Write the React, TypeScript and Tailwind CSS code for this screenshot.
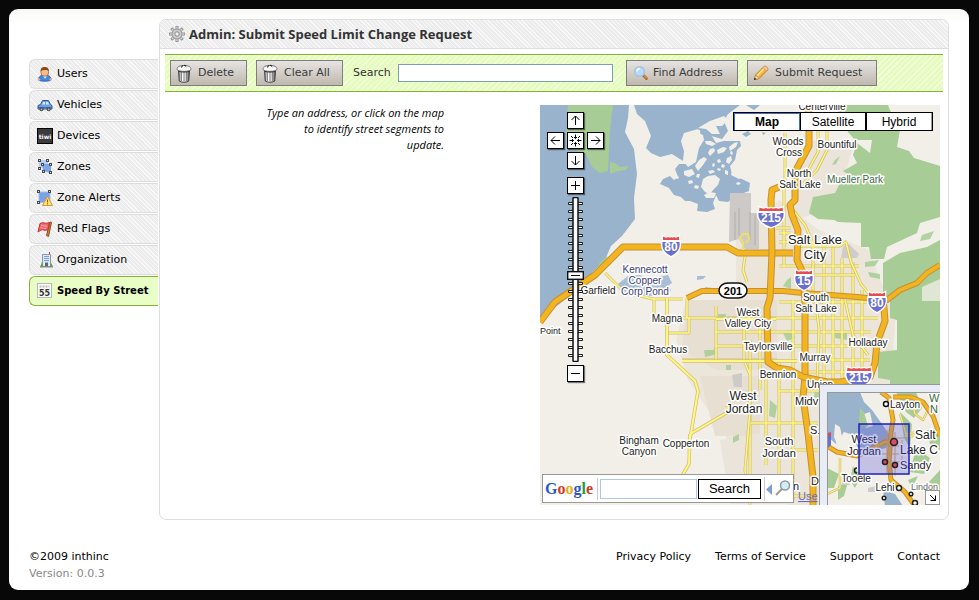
import type { ReactNode } from "react";

const uiFont = "font-['DejaVu_Sans',Verdana,sans-serif]";

/* ---------- icons ---------- */

function Svg({ children, size = 16 }: { children: ReactNode; size?: number }) {
  return (
    <svg width={size} height={size} viewBox="0 0 16 16" aria-hidden="true" className="shrink-0">
      {children}
    </svg>
  );
}

const UserIcon = () => (
  <Svg>
    <path d="M1.500 14c0-4 3-5 6.500-5s6 1.500 6 5c-1 1.500-11.500 1.500-12.500 0z" fill="#3f8ae0" stroke="#1f5fc0" />
    <path d="M6 10l2 3 2-3z" fill="#cfe6ff" />
    <circle cx="1.900" cy="13.500" r="1.300" fill="#eeb07a" />
    <circle cx="13.700" cy="13.500" r="1.300" fill="#eeb07a" />
    <rect x="4" y="2.500" width="7.500" height="7.500" rx="3" fill="#f6bd8b" stroke="#a86432" strokeWidth=".8" />
    <path d="M3.600 5.500C3.500 2 5 1 7.700 1s4.400 1.200 4.200 4.500c-1-1.500-2-1.800-4.200-1.500-2 .2-3 .2-4.100 1.500z" fill="#8b4a1c" />
  </Svg>
);
const CarIcon = () => (
  <Svg>
    <path d="M1 8.500l2.500-1L5.500 3.500h6l2 4 1.500 1v3.500H1z" fill="#6ea1df" stroke="#2c5a9c" />
    <path d="M5 7.500L6.300 5H8v2.500zM9 5h2l1.200 2.500H9z" fill="#d5e8fb" />
    <path d="M1 10.500h14" stroke="#3b6cb0" />
    <circle cx="4.500" cy="12.300" r="2" fill="#4b4b4b" />
    <circle cx="4.500" cy="12.300" r=".9" fill="#b8b8b8" />
    <circle cx="11.700" cy="12.300" r="2" fill="#4b4b4b" />
    <circle cx="11.700" cy="12.300" r=".9" fill="#b8b8b8" />
  </Svg>
);
const DeviceIcon = () => (
  <Svg>
    <rect x=".5" y=".5" width="15" height="15" fill="#3c3c3c" stroke="#000" />
    <text x="8" y="10.500" fontSize="6" fontWeight="bold" fill="#fff" textAnchor="middle" fontFamily="DejaVu Sans">tiwi</text>
  </Svg>
);
const Handle = ({ x, y }: { x: number; y: number }) => (
  <rect x={x} y={y} width="2" height="2" fill="#ddd" stroke="#4a4a4a" />
);
const ZonesIcon = () => (
  <Svg>
    <path d="M2 1h9v8H2z" fill="#b6cff5" />
    <path d="M5 5l9 0v9l-8-2z" fill="#7ba7ea" />
    <Handle x={1.5} y={.5} /><Handle x={9.5} y={.5} /><Handle x={1.5} y={8.5} />
    <Handle x={4.5} y={4.5} /><Handle x={12.5} y={4.5} /><Handle x={5.5} y={11.5} /><Handle x={12.5} y={12.5} />
  </Svg>
);
const AlertIcon = () => (
  <Svg>
    <path d="M2 2h11v9L2 13z" fill="#78a3e6" stroke="#9fbfee" />
    <Handle x={.5} y={.5} /><Handle x={11.5} y={.5} /><Handle x={.5} y={11.5} />
    <path d="M10.500 6.500l5 9h-10z" fill="#ffe27a" stroke="#d79a24" />
    <path d="M10.500 9.500v3M10.500 13.300v1.200" stroke="#8a5a10" />
  </Svg>
);
const FlagIcon = () => (
  <Svg>
    <path d="M13 1l1.500 .5-3 14-2-1z" fill="#c98742" stroke="#8a501c" />
    <path d="M3 2.500c3-2 5 1 9.500-1L11 8.500c-3 2-5-.5-7 .5L1 11z" fill="#f0666a" stroke="#cf2a30" />
    <path d="M4 4.500c2-1 3 1 6 .5M3.500 7c2-1 3 1 6 .5" stroke="#ffb0b0" fill="none" />
  </Svg>
);
const BuildingIcon = () => (
  <Svg>
    <path d="M12.500 0v3" stroke="#c33" />
    <path d="M5.500 2.500h8v12h-8z" fill="#dce8f8" stroke="#8c98a8" />
    <path d="M7 4.500h5M7 6.500h5M7 8.500h5" stroke="#6f9fe0" />
    <rect x="8" y="10.500" width="3" height="4" fill="#666" />
    <path d="M3 15l2-5 1.500 5zM12.500 15l2-4 1.500 4z" fill="#57a84f" />
    <path d="M3 15h13" stroke="#888" />
  </Svg>
);
const SpeedIcon = () => (
  <Svg>
    <rect x=".5" y=".5" width="14" height="14" fill="#fafafa" stroke="#b8b8b8" />
    <path d="M2.500 3.500h10" stroke="#bbb" strokeWidth="2" strokeDasharray="2 1" />
    <text x="7.500" y="12.500" fontSize="8" fontWeight="bold" fill="#333" textAnchor="middle" fontFamily="DejaVu Sans">55</text>
  </Svg>
);
const GearIcon = () => (
  <Svg>
    <g stroke="#8f8f8f" strokeWidth="3">
      <path d="M8 0v16M0 8h16M2.300 2.300l11.400 11.400M13.700 2.300L2.300 13.700" />
    </g>
    <g stroke="#d2d2d2" strokeWidth="1.500">
      <path d="M8 .7v14.600M.7 8h14.600M3 3l10 10M13 3L3 13" />
    </g>
    <circle cx="8" cy="8" r="5" fill="#cacaca" stroke="#9a9a9a" />
    <circle cx="8" cy="8" r="2.200" fill="#f2f2f2" stroke="#8a8a8a" />
  </Svg>
);
const TrashIcon = () => (
  <svg width="16" height="19" viewBox="0 0 16 19" aria-hidden="true" className="shrink-0">
    <defs>
      <linearGradient id="can"><stop offset="0" stopColor="#777" /><stop offset=".35" stopColor="#fff" /><stop offset=".7" stopColor="#ccc" /><stop offset="1" stopColor="#444" /></linearGradient>
    </defs>
    <path d="M2.500 6h11l-.7 11c-2 1.700-7.600 1.700-9.600 0z" fill="url(#can)" stroke="#444" />
    <path d="M5.500 8v9M8 8v9.500M10.500 8v9" stroke="#888" />
    <path d="M1 5.500C1 2.500 4 1.500 8 1.500s7 1 7 4C13 8 3 8 1 5.500z" fill="#f8f8f8" stroke="#777" />
    <path d="M5.500 3.500C6 .5 10 .5 10.500 3.500" fill="none" stroke="#222" strokeWidth="1.200" strokeDasharray="2.500 1" />
    <path d="M2.500 7.300c3 1 8 1 11 0" fill="none" stroke="#333" />
  </svg>
);
const FindIcon = () => (
  <Svg>
    <path d="M10 10l3.500 3.500" stroke="#b3682b" strokeWidth="3" strokeLinecap="round" />
    <path d="M10 9.500l4 4" stroke="#eaa765" strokeWidth="1" />
    <circle cx="6.500" cy="6.500" r="4.800" fill="#b5dafb" stroke="#a3c2e6" strokeWidth="1.500" />
    <path d="M4 6.500c0-2 1-2.800 2.800-3" stroke="#fff" strokeWidth="1.500" fill="none" />
  </Svg>
);
const PencilIcon = () => (
  <Svg>
    <path d="M1.500 14.500l1-4.500 8.500-8.500c1.500-1 4.500 1.500 3.500 3.500L6 13.500z" fill="#fbb13c" stroke="#c87a1c" />
    <path d="M4.500 10.500l7-7.500" stroke="#ffe58c" strokeWidth="1.800" />
    <path d="M10 2.500l3.500 3.500 1.300-1.500c.5-2-2-4-3.800-3z" fill="#f6c7a0" stroke="#d08a50" strokeWidth=".7" />
    <path d="M1.500 14.500l1-4.500 3.500 3.500z" fill="#fbe6c0" stroke="#b8823a" strokeWidth=".7" />
    <path d="M1 15l.7-2.500 1.800 1.800z" fill="#222" />
  </Svg>
);

/* ---------- map drawing ---------- */

function Road({ d, w = 2 }: { d: string; w?: number }) {
  return (
    <g fill="none" strokeLinejoin="round">
      <path d={d} stroke="#d2c07a" strokeWidth={w + 1.5} />
      <path d={d} stroke="#fff67c" strokeWidth={w} />
    </g>
  );
}

function Freeway({ d, w = 5 }: { d: string; w?: number }) {
  return (
    <g fill="none" strokeLinejoin="round">
      <path d={d} stroke="#c78f35" strokeWidth={w + 2} />
      <path d={d} stroke="#f2b51f" strokeWidth={w} />
    </g>
  );
}

type LabelProps = { x: number; y: number; size?: number; fill?: string; anchor?: "start" | "middle"; children: string };
function Label({ x, y, size = 10, fill = "#222", anchor = "middle", children }: LabelProps) {
  return (
    <text x={x} y={y} fontSize={size} fill={fill} textAnchor={anchor} stroke="#fff" strokeWidth="3" strokeLinejoin="round" paintOrder="stroke" fontFamily="Liberation Sans, Arial, sans-serif">
      {children}
    </text>
  );
}

function Shield({ x, y, wide = false, children }: { x: number; y: number; wide?: boolean; children: string }) {
  const body = wide
    ? "M-12.500 -4H12.500C13.500 3 7 8 0 10C-7 8 -13.500 3 -12.500 -4z"
    : "M-8.500 -4H8.500C9.500 3 6 7 0 10C-6 7 -9.500 3 -8.500 -4z";
  const crown = wide
    ? "M-11.500 -9.500Q-8 -7.500 -5 -9Q-2 -8 0 -9Q2 -8 5 -9Q8 -7.500 11.500 -9.500L12 -6H-12z"
    : "M-8 -9.500Q-5 -7.500 -3 -9Q-1 -8 0 -9Q1 -8 3 -9Q5 -7.500 8 -9.500L8 -6H-8z";
  return (
    <g transform={`translate(${x} ${y})`}>
      <path d={body} fill="#fff" stroke="#fff" strokeWidth="3" />
      <path d={crown} fill="#fff" stroke="#fff" strokeWidth="2.500" />
      <path d={body} fill="#6b70cf" />
      <path d={crown} fill="#e54b50" />
      <text y="5" fontSize="12" fontWeight="bold" fill="#fff" textAnchor="middle" fontFamily="Liberation Sans, Arial, sans-serif">{children}</text>
    </g>
  );
}

const ponds =
  "M694 128l8 2 8 3 6 10 8-2 8 0 8 0 1 5-4 4-2 10-5 6 2 8 8 4 10 5-1 8-8 3-7 3-6 5-9-1-3-6-3 8 2 6-8 3-10-1 1-7-8-3-5 0-4-4-7-2-5-7-9-4 3-5 7-3 4 4 4-3-3-8 4-5 7 0 2-3 6-4 3-9 4-8-1-10z";
const islands =
  "M684 138l4-6 8 0 7 3 1 5-5 8-3 14-8 5-4-5 1-9-3-9zM699 160l5-3 3 2-4 6-5 6-3-5zM705 141l6 0 5 3-4 2-6-2zM710 149l4-1 1 3-5 5-2-3zM717 150l6-3 4 1-3 4-6 2zM729 147l5-4 4-1-2 5-6 4zM684 171l8-2 3 5-6 3-5-2zM703 179l5-3 7-1 5 4-2 6-5 5-3 4-5-2-4-5zM708 171l5-1 2 2-5 2zM704 195l5-3 7 1-2 5-8 0zM717 160l3-1 1 3-3 1zM713 163l2 1-1 3-2-1zM722 164l3 1-1 3-3-1zM718 168l3 1-1 2-3-1zM727 158l4-2 1 4-3 4-3-2zM725 170l3 1 0 4-3-1zM732 171l4 2 6 5-3 1-8-4zM697 174l3 0-1 4-3-1zM688 181l4-1 1 3-4 1zM695 185l4 1-1 3-4-1zM676 176l3 1-1 2-3-1zM736 183l3-1 2 2-4 1zM730 152l2-1 1 3-2 1z";

function MapCanvas() {
  return (
    <svg viewBox="540 105 400 400" className="block size-full" role="img" aria-label="Street map of Salt Lake City">
      <rect x="540" y="105" width="400" height="400" fill="#f2efe9" />
      {/* built-up areas */}
      <path d="M779 200l40 30 50 20 15 40 12 20-5 70-8 45-20 80h-75l-30-55-30-10-40-60-12-40 10-40h50v-60z" fill="#ebe5da" />
      <path d="M687 300h90v70h-60l-35-20zM700 376h60v60h-45z" fill="#e7dfd2" />
      <path d="M812 140l40 10-15 55-40 15-6-30zM720 440l60-10 20 74h-70z" fill="#ebe4da" />
      {/* lakes */}
      <path d="M540 105h89l-1 13-3 14 9 17 3 25-3 24 1 21-13 17-11 10-6 14-20 20-14 15-31 24z" fill="#99b3cc" />
      <path d="M634 105h106l-12 9-4 7 4 10-6 8-14-4-10-6-14 4-3 8 3 10-1 10-11-7-12 3-9-4-5-5 5-12-6-15-8-7z" fill="#99b3cc" />
      <path d={ponds} fill="#99b3cc" />
      <path d={islands} fill="#f2efe9" />
      <path d="M698 128l12-7 14-5 4 4-6 6-6 0 4 8-8 0-6-5z" fill="#f2efe9" />
      <path d="M746 105l8 5 6-5zM742 134l6-3 3 3-5 3zM762 132l4 1-3 2z" fill="#99b3cc" />
      <path d="M618 284l10-8 12-1 6 4 12-2 10-2 4 8-3 2 2 6-14 5-30-1-4-4zM697 276h9l-3 3-6 1zM705 287l8 1-8 3z" fill="#a8bdd6" />
      {/* parks */}
      <path d="M568 105h45l-3 26-1 20-1 20-8 2-8-6-6-13-15-5-5-10z" fill="#a7cc95" />
      <path d="M610 162l5 1 5 4 9-1-3 4-8 1-8 3zM600 262l8-6-4 8-6 4z" fill="#a7cc95" />
      <path d="M835 105h53l2 5 10 20-3 17 12 4 5 7 26 8v51l-20 6-3 10-30 14-3 12h-13l-2-12h-8v-24l-23-1-4-2-16-1-9-6 4-16 22-4 6-12h17l-15-10 14-8-4-8 4-12 13 10 2-13h-17l-7-8z" fill="#a7cc95" />
      <path d="M883 300v-37l17-10 27-6 13-7v145h-50v-5l-12-2v-26l19-2v-30l-7-2v-18z" fill="#a7cc95" />
      <path d="M922 287l18-8v22h-18z" fill="#efece4" opacity=".8" />
      <path d="M922 235l12-4-4 8-10 2zM865 262l14-2-4 6-10 1zM868 272l12 2v5l-10-2zM835 160l5-4-4 8-4 1zM812 182l5-2-3 8-4 2zM787 280l4-3v12l-8-3zM704 350h10v-4l3 8-12 3zM718 314h8v3h-8zM726 365h5v5h-5zM733 437l6-3v6l-6 3zM783 333l8-3 4 8-8 3zM805 349l5 4-4 5-5-3zM835 330l12 3v7l-12-2zM815 390l10 5-5 5-6-3zM770 400l7 6-2 12-6-2z" fill="#a7cc95" opacity=".85" />
      {/* airport */}
      <path d="M730 193h21v20h8v36h-14l-6-10-10 3z" fill="#ccc9c6" />
      <path d="M735 212v28M739 208v28M755 215v30M750 212v28" stroke="#b1aeac" />
      <path d="M843 247l6-3 10 10-2 4h-16z" fill="#cfccc9" />
      <path d="M732 375l10-2v14h-8z" fill="#cdcac7" />

      {/* street grid */}
      <Road w={1.5} d="M716 330v-24M728 318h150M716 332h155M716 346h160M682 360h95M716 360v-45M784 187v80M824 240v140M833 246v134M842 258v122M853 262v118M862 290v80M779 233h12M779 242h30M779 266h80M779 302h95M779 391h70M748 423h70M750 400v103M779 360v135M793 300v200M760 320v70M790 450h28M766 375v90M805 360h65M805 372h40" />
      <Road w={1.5} d="M785 133v54M827 112v38l-10 20-14 14M818 130v22l-12 22M793 210l12 15 8 18v55M747 282l-4-12 3-20M776 228h15M800 246h40l6-4 5 20 10 22 10 12M815 275h40M605 273l20 20 15 3 13 3h30M654 298v18M654 318h35v15h-22M687 298v20h50M744 310v50l6 15M750 340v70l-5 60 5 35M725 408h15M845 300l8 35 15 20" />
      <Road w={2} d="M667 298v57l28 26 3 10-8 48M690 434l38-22M690 434l-1 30-7 12M682 361h115M716 319h60" />
      <Road w={1.5} d="M733 475v28M740 496h75M815 298l4 30-2 60M720 480h75" />

      {/* freeways */}
      <Freeway d="M540 322l15-20 40-27 28-28h104l11 6h55" />
      <Freeway d="M687 298l15-7h81l20 2 54 4 30 3 13-10 17-7 10-10 13-8" w={4} />
      <Freeway d="M809 105v41l-14 26v28l-5 5 2 10 6 15-1 30 6 13 2 30v74l-2 20 5 36 5 44v28" />
      <Freeway d="M779 187l-7 3-1 10 1 53-2 45-3 10 1 54 9 6 13 2 13 7 24 5h13l30-5 5-14 2-20 8-22-2-25" />
      <path d="M743 250v-8l-3-4 3-4h5l1 5-3 4" fill="none" stroke="#efe063" strokeWidth="2" />

      <Shield x={671} y={246}>80</Shield>
      <Shield x={771} y={217} wide>215</Shield>
      <Shield x={804} y={280}>15</Shield>
      <Shield x={877} y={302}>80</Shield>
      <Shield x={859} y={377} wide>215</Shield>
      <rect x="719" y="283" width="28" height="15" rx="9" fill="#fff" stroke="#111" strokeWidth="1.500" />
      <text x="733" y="295" fontSize="11" fontWeight="bold" textAnchor="middle" fontFamily="Liberation Sans">201</text>

      <Label x={822} y={110}>Centerville</Label>
      <Label x={788} y={145}>Woods</Label>
      <Label x={789} y={156}>Cross</Label>
      <Label x={837} y={148}>Bountiful</Label>
      <Label x={799} y={177}>North</Label>
      <Label x={800} y={188}>Salt Lake</Label>
      <Label x={855} y={183} fill="#3c6a44">Mueller Park</Label>
      <Label x={815} y={244} size={13}>Salt Lake</Label>
      <Label x={815} y={259} size={13}>City</Label>
      <Label x={645} y={273} fill="#3a4078">Kennecott</Label>
      <Label x={645} y={284} fill="#3a4078">Copper</Label>
      <Label x={645} y={295} fill="#3a4078">Corp Pond</Label>
      <Label x={598} y={294}>Garfield</Label>
      <Label x={540} y={334} size={9} anchor="start">Point</Label>
      <Label x={667} y={322}>Magna</Label>
      <Label x={668} y={353}>Bacchus</Label>
      <Label x={748} y={316}>West</Label>
      <Label x={748} y={327}>Valley City</Label>
      <Label x={816} y={301}>South</Label>
      <Label x={816} y={312}>Salt Lake</Label>
      <Label x={768} y={350}>Taylorsville</Label>
      <Label x={815} y={361}>Murray</Label>
      <Label x={868} y={346}>Holladay</Label>
      <Label x={778} y={378}>Bennion</Label>
      <Label x={820} y={388}>Union</Label>
      <Label x={743} y={400} size={12}>West</Label>
      <Label x={744} y={413} size={12}>Jordan</Label>
      <Label x={795} y={405} size={11} anchor="start">Midv</Label>
      <Label x={810} y={434} size={11} anchor="start">S.</Label>
      <Label x={779} y={445} size={11}>South</Label>
      <Label x={779} y={457} size={11}>Jordan</Label>
      <Label x={639} y={444}>Bingham</Label>
      <Label x={639} y={455}>Canyon</Label>
      <Label x={686} y={447}>Copperton</Label>
      <Label x={811} y={485} anchor="start" size={11}>D</Label>
      <Label x={793} y={490} anchor="start" size={11}>n</Label>
      <text x="798" y="500" fontSize="11" fill="#6a6ad0" textDecoration="underline" fontFamily="Liberation Sans">Use</text>
    </svg>
  );
}

function OverviewMap() {
  return (
    <svg viewBox="828 393 112 112" className="block size-[112px]" role="img" aria-label="Overview map">
      <rect x="827" y="392" width="114" height="114" fill="#f2efe9" />
      <path d="M827 392h33l4 10 8 8 10 14 8 12-4 12-16 4-12-4-8-14-6-2-8 12-9-8z" fill="#99b3cc" />
      <path d="M835 424l5 3 2 10-4 10-4-10zM864 414l6-2 3 14-7 2z" fill="#f2efe9" />
      <path d="M860 408l4 4 4 14-6 2-3-8zM896 392h20l6 16-8 10-8-6zM900 412l12 12-2 24-6-10zM916 448l14 10-6 16-14-2zM827 468l12 6-5 14h-7zM838 486l10-4-4 14-6 4zM853 466l8 10-6 12-5-8zM908 480l10-4-6 12zM926 430h14v20l-10-6zM929 482l11-12v20z" fill="#a7cc95" />
      <path d="M883 490l12 4 8 12h-18z" fill="#99b3cc" />
      <path d="M842 478h8v7h-8zM868 488l8-2v6h-8z" fill="#ccc" />
      <Road w={1} d="M840 458v30l-13 6M900 414l6 20 12-2M912 402l3 12 8 6 6-12M905 436h10" />
      <Freeway w={3} d="M881 392l8 6 4 22-2 12-2 30 2 18 14 12 10 14M893 397h18l12 5 10 14 7 20M827 446l10 6 20 4 28-14h8" />
      <path d="M878 438h26M880 446h24M882 454h20M884 462h20M887 430v44M895 432v44M902 440v30" stroke="#d9a95a" />
      <circle cx="886" cy="404" r="2.500" fill="#fff" stroke="#111" strokeWidth="1.500" />
      <Label x={890} y={408} anchor="start">Layton</Label>
      <Label x={929} y={402} size={11} anchor="start" fill="#3c6a44">W</Label>
      <Label x={930} y={413} size={11} anchor="start" fill="#3c6a44">N</Label>
      <Label x={864} y={443} size={11}>West</Label>
      <Label x={864} y={455} size={11}>Jordan</Label>
      <Label x={915} y={439} size={12} anchor="start">Salt</Label>
      <Label x={900} y={454} size={12} anchor="start">Lake C</Label>
      <Label x={900} y={469} size={11} anchor="start">Sandy</Label>
      <Label x={856} y={482}>Tooele</Label>
      <Label x={885} y={491}>Lehi</Label>
      <Label x={911} y={490} size={9} anchor="start" fill="#666">Lindon</Label>
      <rect x="859" y="424" width="50" height="50" fill="#4b4bd8" fillOpacity=".28" stroke="#2020b8" strokeWidth="1.500" />
      <g fill="#d84a6a" stroke="#222" strokeWidth="1.500">
        <circle cx="894" cy="442" r="3.500" />
        <circle cx="885" cy="462" r="2.500" />
        <circle cx="895" cy="465" r="2.500" />
      </g>
      <g fill="#fff" stroke="#222" strokeWidth="1.500">
        <circle cx="899" cy="488" r="2.500" />
        <circle cx="911" cy="494" r="1.800" />
        <circle cx="884" cy="498" r="1.800" />
        <circle cx="915" cy="503" r="2.500" />
        <path d="M857 468a2.500 2.500 0 1 0 0 5" fill="none" />
      </g>
      <path d="M827 433l4-1v13l-4 4z" fill="#6a6fce" />
      <path d="M827 433h4v3h-4z" fill="#e2484d" />
    </svg>
  );
}

/* ---------- map controls ---------- */

function PadButton({ label, d, className = "" }: { label: string; d: string; className?: string }) {
  return (
    <button type="button" aria-label={label} className={`size-[17px] border border-black bg-white shadow-[1px_1px_1px_rgba(0,0,0,0.5)] ${className}`}>
      <svg viewBox="0 0 15 15" className="block size-[15px]" fill="none" stroke="#000">
        <path d={d} />
      </svg>
    </button>
  );
}

const ticks = Array.from({ length: 20 }, (_, i) => 6 + i * 8);

function MapControls() {
  return (
    <div className="absolute top-[7px] left-[7px] flex w-[57px] flex-col items-center">
      <div className="grid grid-cols-3 gap-[3px]">
        <PadButton className="col-start-2" label="Pan up" d="M7.500 12V3M3.500 7l4-4 4 4" />
        <PadButton className="col-start-1" label="Pan left" d="M12 7.500H3M7 3.500l-4 4 4 4" />
        <PadButton label="Reset view" d="M7.500 1.500v4M7.500 9.500v4M1.500 7.500h4M9.500 7.500h4M3 3l2 2M12 3l-2 2M3 12l2-2M12 12l-2-2M6 4l1.500 1.500L9 4M6 11l1.500-1.500L9 11M4 6l1.500 1.500L4 9M11 6L9.500 7.500 11 9" />
        <PadButton label="Pan right" d="M3 7.500h9M8 3.500l4 4-4 4" />
        <PadButton className="col-start-2" label="Pan down" d="M7.500 3v9M3.500 8l4 4 4-4" />
      </div>
      <PadButton className="mt-2" label="Zoom in" d="M7.500 3v9M3 7.500h9" />
      <div className="relative my-[3px] h-[165px] w-[17px]">
        <svg viewBox="0 0 17 165" className="block h-[165px] w-[17px]" aria-hidden="true">
          {ticks.map((y) => (
            <g key={y}>
              <rect x="1" y={y - 1} width="15" height="3" rx="1" fill="#222" />
              <rect x="2" y={y} width="13" height="1" fill="#fff" />
            </g>
          ))}
          <rect x="6" y="0.500" width="5" height="164" rx="1" fill="#fff" stroke="#111" strokeWidth="1.500" />
          <rect x=".7" y="74.700" width="15.600" height="7.600" fill="#fff" stroke="#111" strokeWidth="1.400" />
          <path d="M4 78.500h9" stroke="#111" />
        </svg>
        <input type="range" aria-label="Zoom level" min="0" max="19" defaultValue="10" className="absolute inset-0 h-full w-full opacity-0 [direction:rtl] [writing-mode:vertical-lr]" />
      </div>
      <PadButton label="Zoom out" d="M3 7.500h9" />
    </div>
  );
}

function MapTypes() {
  const base = "h-[17px] flex-1 bg-white text-[12px] leading-[16px] text-black";
  return (
    <div className="absolute top-[7px] right-[7px] flex w-[200px] border border-black font-['Liberation_Sans',Arial,sans-serif]">
      <button type="button" className={`${base} border-t border-r border-l border-[#3a6ec8] font-bold`}>Map</button>
      <button type="button" className={`${base} border-r-2 border-l border-black`}>Satellite</button>
      <button type="button" className={`${base} border-r border-[#999]`}>Hybrid</button>
    </div>
  );
}

function GoogleSearch() {
  return (
    <form onSubmit={(e) => e.preventDefault()} className="absolute bottom-[2px] left-[2px] flex h-[29px] w-[252px] items-center border border-[#999] bg-white font-['Liberation_Sans',Arial,sans-serif]">
      <span className="w-[52px] pl-[2px] font-['Liberation_Serif','Times_New_Roman',serif] text-[16px] leading-[24px] font-bold text-[#2b57c8]">
        G<span className="text-[#d63a2a]">o</span><span className="text-[#e2b01a]">o</span>g<span className="text-[#2a9a3c]">l</span><span className="text-[#d63a2a]">e</span>
      </span>
      <span className="ml-[2px] h-[22px] border-l border-[#ccc]" />
      <input type="text" aria-label="Search the map" className="ml-[2px] h-[20px] w-[97px] border border-[#b0c4f0] bg-white px-1 text-[12px] outline-none" />
      <button type="submit" className="ml-px h-[20px] w-[63px] border border-black bg-white text-[13px] leading-[18px] text-black">Search</button>
      <svg viewBox="0 0 30 24" className="ml-px h-6 w-[30px]" aria-hidden="true">
        <path d="M2.500 0v24" stroke="#ccc" />
        <path d="M10 7v11l-6-5.500z" fill="#7d9fd6" />
        <path d="M14 18l6-6" stroke="#9a9a9a" strokeWidth="2" />
        <circle cx="23" cy="8.500" r="4.500" fill="#d6ecf5" stroke="#8f9aa0" strokeWidth="1.500" />
      </svg>
    </form>
  );
}

/* ---------- page parts ---------- */

const navItems = [
  { label: "Users", icon: <UserIcon /> },
  { label: "Vehicles", icon: <CarIcon /> },
  { label: "Devices", icon: <DeviceIcon /> },
  { label: "Zones", icon: <ZonesIcon /> },
  { label: "Zone Alerts", icon: <AlertIcon /> },
  { label: "Red Flags", icon: <FlagIcon /> },
  { label: "Organization", icon: <BuildingIcon /> },
  { label: "Speed By Street", icon: <SpeedIcon />, active: true },
];

const grayStripes = "bg-[repeating-linear-gradient(45deg,#ececec_0px,#ececec_2px,#f8f8f8_2px,#f8f8f8_3px)]";

function ToolButton({ icon, className = "", children }: { icon: ReactNode; className?: string; children: string }) {
  return (
    <button type="button" className={`flex h-[26px] items-center border border-[#807e7c] bg-linear-to-b from-[#e6e4e2] to-[#bfb8ae] text-[11px] leading-[14px] whitespace-nowrap text-[#3b3b3b] ${className}`}>
      {icon}
      {children}
    </button>
  );
}

export default function App() {
  return (
    <div className={`min-h-screen bg-[#080808] py-[9px] pr-[10px] pl-[9px] text-[11px] text-black ${uiFont}`}>
      <div className="rounded-[9px] bg-white bg-linear-to-b from-[#f8f8f6] to-white to-[14px] px-5 pt-[10px] pb-2">
        <div className="flex">
          <nav className="w-[129px] shrink-0 pt-10" aria-label="Administration">
            <ul className="flex flex-col gap-px">
              {navItems.map((item) => (
                <li key={item.label}>
                  <a
                    href="#"
                    aria-current={item.active ? "page" : undefined}
                    className={`flex h-[30px] items-center gap-1 rounded-l-[6px] border border-r-0 pl-[7px] leading-[14px] whitespace-nowrap ${
                      item.active ? "border-[#87b234] bg-[#e9fdc6] text-[10px] font-bold" : `border-[#dcdcdc] ${grayStripes}`
                    }`}
                  >
                    {item.icon}
                    {item.label}
                  </a>
                </li>
              ))}
            </ul>
          </nav>

          <main className="ml-px min-w-0 flex-1 rounded-[7px] border border-[#dedede] bg-white pb-[14px]">
            <header className={`flex h-[29px] items-center gap-1 rounded-t-[6px] border-b border-[#dedede] pl-[9px] ${grayStripes}`}>
              <GearIcon />
              <h1 className="font-['Open_Sans','Trebuchet_MS',sans-serif] text-[13px] leading-[18px] font-bold text-[#333]">
                Admin: Submit Speed Limit Change Request
              </h1>
            </header>

            <form onSubmit={(e) => e.preventDefault()} className="mx-[5px] mt-[5px] flex h-[38px] items-center border-y border-[#87b234] bg-[repeating-linear-gradient(135deg,#e6fbbf_0px,#e6fbbf_3px,#f3ffdf_3px,#f3ffdf_4px)] pl-[5px]">
              <ToolButton className="w-[77px] gap-[6px] pl-[5px]" icon={<TrashIcon />}>Delete</ToolButton>
              <ToolButton className="ml-[9px] w-[87px] gap-[6px] pl-[5px]" icon={<TrashIcon />}>Clear All</ToolButton>
              <label htmlFor="address" className="ml-[10px] w-[45px] leading-[14px] text-[#333]">Search</label>
              <input id="address" type="text" className="h-[18px] w-[215px] border border-[#7f9db9] bg-white px-1 outline-none" />
              <ToolButton className="ml-[13px] w-[112px] gap-[4px] pl-[6px]" icon={<FindIcon />}>Find Address</ToolButton>
              <ToolButton className="ml-[9px] w-[130px] gap-[6px] pl-[5px]" icon={<PencilIcon />}>Submit Request</ToolButton>
            </form>

            <div className="mt-[13px] flex justify-between pr-2">
              <p className="w-[284px] pl-[80px] text-right font-['Open_Sans','Trebuchet_MS',sans-serif] text-[11px] leading-[16px] italic">
                Type an address, or click on the map<br />to identify street segments to<br />update.
              </p>
              <section className="relative size-[400px] overflow-hidden" aria-label="Map">
                <MapCanvas />
                <MapControls />
                <MapTypes />
                <GoogleSearch />
                <div className="absolute right-0 bottom-0 border-t border-l border-[#979797] bg-[#e8ecf7] pt-[7px] pl-[7px]">
                  <div className="border-t border-l border-[#979797]">
                    <OverviewMap />
                  </div>
                  <button type="button" aria-label="Hide overview" className="absolute right-0 bottom-0 size-[15px] border border-[#979797] bg-white">
                    <svg viewBox="0 0 13 13" className="block size-[13px]" fill="none" stroke="#000">
                      <path d="M4 4l5.500 5.500M9.500 4.500v5h-5" />
                    </svg>
                  </button>
                </div>
              </section>
            </div>
          </main>
        </div>

        <footer className="mt-7 flex items-start justify-between pr-[9px] leading-[17px]">
          <div>
            <p>©2009 inthinc</p>
            <p className="text-[#888]">Version: 0.0.3</p>
          </div>
          <nav className="flex gap-6" aria-label="Footer">
            <a href="#">Privacy Policy</a>
            <a href="#">Terms of Service</a>
            <a href="#">Support</a>
            <a href="#">Contact</a>
          </nav>
        </footer>
      </div>
    </div>
  );
}
